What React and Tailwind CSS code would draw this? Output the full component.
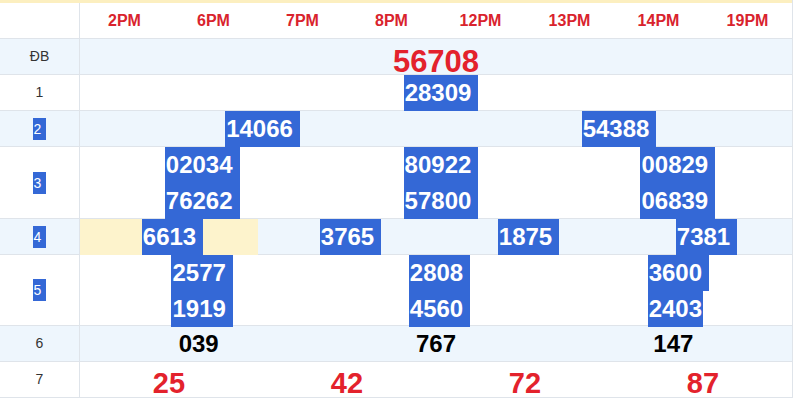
const RED = 'text-[#e3222c]'

function Hi({lines, pr = 'pr-[7px]'}) {
    return (
        <span className="inline-flex flex-col items-start h-full">
            {lines.map((l, i) => (
                <span key={i} className={`flex-1 flex items-center bg-[#3468d6] text-white pl-[1px] ${pr}`}>{l}</span>
            ))}
        </span>
    )
}

function Label({text, sel}) {
    if (!sel) return <span className="text-[14px] font-normal text-[#333]">{text}</span>
    return <span className="text-[14px] font-normal text-white bg-[#3468d6] pl-[1px] pr-[5px] h-[22px] leading-[22px]">{text}</span>
}

function Row({label, sel, h = 'h-[36px]', bg = 'bg-white', cols = 'grid-cols-1', children}) {
    return (
        <div className={`flex ${h} border-b border-[#dfe4ea] ${bg}`}>
            <div className="w-[80px] shrink-0 border-r border-[#dfe4ea] flex items-center justify-center">
                <Label text={label} sel={sel}/>
            </div>
            <div className={`flex-1 grid ${cols}`}>{children}</div>
        </div>
    )
}

function Cell({children, extra = ''}) {
    return <div className={`flex justify-center items-stretch ${extra}`}>{children}</div>
}

export default function App() {
    const heads = ['2PM', '6PM', '7PM', '8PM', '12PM', '13PM', '14PM', '19PM']
    const blue = 'bg-[#eef6fd]'
    return (
        <div className="w-[800px] h-[400px] bg-white overflow-hidden" style={{fontFamily: '"Liberation Sans", Arial, sans-serif'}}>
            <div className="w-[793px] border-r border-[#dfe4ea] font-bold">
                <div className="h-[3px] bg-[#fcefc0]"/>
                <div className="flex h-[36px] border-b border-[#dfe4ea]">
                    <div className="w-[80px] shrink-0 border-r border-[#dfe4ea]"/>
                    <div className="flex-1 grid grid-cols-8">
                        {heads.map(h => (
                            <div key={h} className="flex items-center justify-center text-[16px] text-[#d9232d]">{h}</div>
                        ))}
                    </div>
                </div>
                <Row label="ĐB" bg={blue}>
                    <Cell><span className={`flex items-center text-[31px] ${RED}`}>56708</span></Cell>
                </Row>
                <Row label="1">
                    <Cell extra="text-[24px] pl-[10px]"><Hi lines={['28309']}/></Cell>
                </Row>
                <Row label="2" sel bg={blue} cols="grid-cols-2">
                    <Cell extra="text-[24px] pl-[9px]"><Hi lines={['14066']}/></Cell>
                    <Cell extra="text-[24px] pl-[10px]"><Hi lines={['54388']}/></Cell>
                </Row>
                <Row label="3" sel h="h-[72px]" cols="grid-cols-3">
                    <Cell extra="text-[24px] pl-[7px]"><Hi lines={['02034', '76262']}/></Cell>
                    <Cell extra="text-[24px] pl-[10px]"><Hi lines={['80922', '57800']}/></Cell>
                    <Cell extra="text-[24px] pl-[9px]"><Hi lines={['00829', '06839']}/></Cell>
                </Row>
                <Row label="4" sel bg={blue} cols="grid-cols-4">
                    <Cell extra="text-[24px] pl-[7px] bg-[#fdf3cc]"><Hi lines={['6613']}/></Cell>
                    <Cell extra="text-[24px] pl-[7px]"><Hi lines={['3765']}/></Cell>
                    <Cell extra="text-[24px] pl-[7px]"><Hi lines={['1875']}/></Cell>
                    <Cell extra="text-[24px] pl-[7px]"><Hi lines={['7381']}/></Cell>
                </Row>
                <Row label="5" sel h="h-[71px]" cols="grid-cols-3">
                    <Cell extra="text-[24px] pl-[7px]"><Hi lines={['2577', '1919']}/></Cell>
                    <Cell extra="text-[24px] pl-[7px]"><Hi lines={['2808', '4560']}/></Cell>
                    <Cell extra="text-[24px] pl-[10px]">
                        <span className="inline-flex flex-col items-start h-full">
                            <span className="flex-1 flex items-center bg-[#3468d6] text-white pl-[1px] pr-[7px]">3600</span>
                            <span className="flex-1 flex items-center bg-[#3468d6] text-white pl-[1px] pr-[1px]">2403</span>
                        </span>
                    </Cell>
                </Row>
                <Row label="6" bg={blue} cols="grid-cols-3">
                    <Cell extra="text-[24px] text-black items-center">039</Cell>
                    <Cell extra="text-[24px] text-black items-center">767</Cell>
                    <Cell extra="text-[24px] text-black items-center">147</Cell>
                </Row>
                <Row label="7" cols="grid-cols-4">
                    <Cell extra={`text-[29px] items-center ${RED}`}>25</Cell>
                    <Cell extra={`text-[29px] items-center ${RED}`}>42</Cell>
                    <Cell extra={`text-[29px] items-center ${RED}`}>72</Cell>
                    <Cell extra={`text-[29px] items-center ${RED}`}>87</Cell>
                </Row>
            </div>
        </div>
    )
}
